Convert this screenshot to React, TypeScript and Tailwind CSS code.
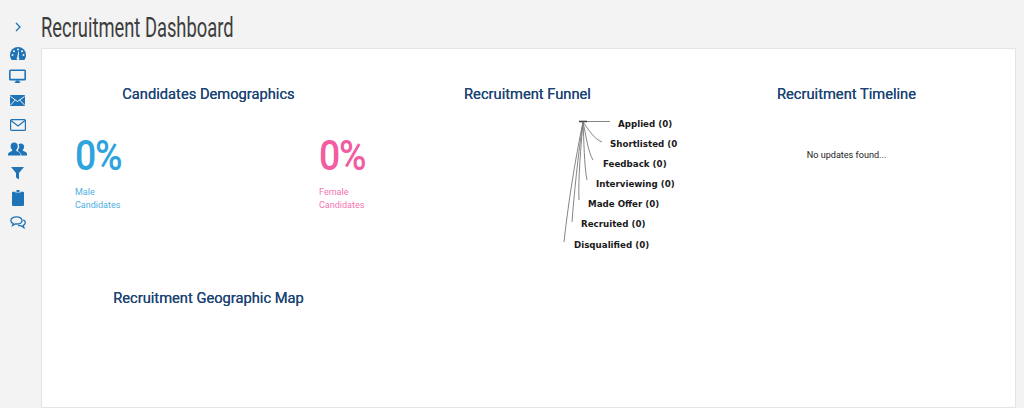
import React from "react";

const blue = "#1f73b7";

function Gauge() {
  return (
    <svg width="16" height="13" viewBox="0 0 16 13" fill={blue}>
      <path d="M8 0a8 8 0 0 0-8 8c0 2 .7 3.6 1.7 5h12.600c1-1.400 1.700-3 1.700-5a8 8 0 0 0-8-8Z" />
      <g fill="#f3f3f3">
        <circle cx="8" cy="2.600" r="1" />
        <circle cx="4" cy="4.200" r="1" />
        <circle cx="12" cy="4.200" r="1" />
        <circle cx="2.500" cy="8" r="1" />
        <circle cx="13.500" cy="8" r="1" />
        <path d="M7.200 10.500 8.300 4.600l.7.100-.2 5.800a1.300 1.300 0 1 1-1.600 0Z" />
      </g>
    </svg>
  );
}
function Monitor() {
  return (
    <svg width="17" height="15" viewBox="0 0 17 14" fill={blue}>
      <path fillRule="evenodd" d="M1.500 0h14A1.500 1.500 0 0 1 17 1.500v8a1.500 1.500 0 0 1-1.500 1.500h-14A1.500 1.500 0 0 1 0 9.500v-8A1.500 1.500 0 0 1 1.500 0Zm.1 1.400v7.800h13.800V1.400Z" />
      <path d="M6.500 11h4v1.600l1.500 1H5l1.500-1Z" />
    </svg>
  );
}
function MailSolid() {
  return (
    <svg width="15" height="11" viewBox="0 0 15 11" fill={blue}>
      <rect width="15" height="11" rx="1" />
      <path d="M.5 1.500 7.500 6.500l7-5M.5 10l5-5.200M14.500 10l-5-5.200" fill="none" stroke="#f3f3f3" strokeWidth="1" />
    </svg>
  );
}
function MailOutline() {
  return (
    <svg width="16" height="12" viewBox="0 0 16 12" fill="none" stroke={blue} strokeWidth="1.200">
      <rect x=".6" y=".6" width="14.800" height="10.800" rx="1" />
      <path d="M1 1.500 8 7l7-5.500" />
    </svg>
  );
}
function Users() {
  return (
    <svg width="19" height="14" viewBox="0 0 19 13" fill={blue}>
      <path d="M13 1c1.900 0 3.100 1.400 3.100 3.200 0 1.300-.6 2.400-1.300 3v1c1.700.6 4.200 1.400 4.200 3.300V13h-5.500c-.2-2.400-1.900-3.500-3.500-4.200V7c.9-.8 1.200-1.700 1.200-3 0-1.200-.3-1.800-.7-2.300.6-.4 1.500-.7 2.500-.7Z" />
      <path d="M6.200 0C8.300 0 9.800 1.600 9.800 3.700c0 1.400-.7 2.700-1.500 3.400v1.300c1.900.6 4.300 1.500 4.300 3.400V13H0v-1.200C0 9.900 2.200 9 4.100 8.400V7.100C3.300 6.400 2.600 5.100 2.600 3.700 2.600 1.600 4.100 0 6.200 0Z" />
    </svg>
  );
}
function Funnel() {
  return (
    <svg width="13" height="13" viewBox="0 0 13 13" fill={blue}>
      <path d="M0 0h13L8 6v6.500L5 10.500V6Z" />
    </svg>
  );
}
function Clipboard() {
  return (
    <svg width="12" height="16" viewBox="0 0 12 16" fill={blue}>
      <path d="M1 1.800h2.500V3h5V1.800H11a1 1 0 0 1 1 1V15a1 1 0 0 1-1 1H1a1 1 0 0 1-1-1V2.800a1 1 0 0 1 1-1Z" />
      <path d="M4.500 0h3v2h1v.5h-5V2h1Z" />
    </svg>
  );
}
function Chat() {
  return (
    <svg width="16" height="13" viewBox="0 0 16 13" fill="none" stroke={blue} strokeWidth="1.300">
      <path d="M6.500.8C3.300.8.800 2.400.800 4.500c0 1.300 1 2.400 2.400 3L2.500 9.500 5.200 8h1.300c3.200 0 5.500-1.500 5.500-3.500S9.700.8 6.500.8Z" />
      <path d="M13.300 3.800c1.200.6 2 1.600 2 2.700 0 1.200-.8 2.200-2 2.800l.6 2.400-2.800-2H8" />
    </svg>
  );
}

const labels: [string, number, number][] = [
  ["Applied (0)", 618, 123.500],
  ["Shortlisted (0", 610, 143.500],
  ["Feedback (0)", 603, 163.500],
  ["Interviewing (0)", 596, 183.500],
  ["Made Offer (0)", 588, 203.500],
  ["Recruited (0)", 581, 224],
  ["Disqualified (0)", 574, 244.500],
];

function Heading({ children }: { children: React.ReactNode }) {
  return (
    <h2 className="text-center text-[#1c4474] text-[14.700px] leading-5 font-normal [text-shadow:0_0_0.4px_#1c4474]">
      {children}
    </h2>
  );
}

function Stat({ color, label }: { color: string; label: string }) {
  return (
    <div className="w-[244px] shrink-0" style={{ color }}>
      <div className="h-[44px] text-[42px] leading-[44px] font-medium tracking-[-1.500px] origin-left scale-x-[0.89]">0%</div>
      <div className="mt-[8px] text-[9px] leading-[13px] w-[60px] opacity-85">{label}</div>
    </div>
  );
}

export default function App() {
  return (
    <div
      className="flex h-[408px] w-[1024px] overflow-hidden bg-[#f3f3f3]"
      style={{ fontFamily: 'Roboto, "Noto Sans", sans-serif' }}
    >
      <aside className="flex w-[41px] shrink-0 flex-col items-center pr-[6px] pt-[21px]">
        <svg width="8" height="12" viewBox="0 0 8 12" fill="none" stroke={blue} strokeWidth="1.300">
          <path d="M2 2l4 4-4 4" />
        </svg>
        <div className="mt-[8px] flex flex-col items-center">
          <div className="flex h-[24px] items-center"><Gauge /></div>
          <div className="flex h-[23px] items-center"><Monitor /></div>
          <div className="flex h-[25px] items-center"><MailSolid /></div>
          <div className="flex h-[24px] items-center"><MailOutline /></div>
          <div className="flex h-[24px] items-center"><Users /></div>
          <div className="flex h-[24px] items-center"><Funnel /></div>
          <div className="flex h-[25px] items-center"><Clipboard /></div>
          <div className="flex h-[24px] items-center"><Chat /></div>
        </div>
      </aside>
      <main className="flex w-[975px] flex-col">
        <h1 className="h-[48px] pt-[11px] text-[28px] leading-[34px] text-[#3d3d3d] font-normal origin-left scale-x-[0.655] whitespace-nowrap">
          Recruitment Dashboard
        </h1>
        <section className="relative flex-1 border border-[#e4e4e4] bg-white pl-[7px] pt-[35px]">
          <div className="grid grid-cols-[319px_319px_319px]">
            <div className="h-[204px]">
              <Heading>Candidates Demographics</Heading>
              <div className="mt-[30px] flex pl-[26px]">
                <Stat color="#2ea3dc" label="Male Candidates" />
                <Stat color="#f25ca2" label="Female Candidates" />
              </div>
            </div>
            <div>
              <Heading>Recruitment Funnel</Heading>
            </div>
            <div>
              <Heading>Recruitment Timeline</Heading>
              <p className="mt-[43px] text-center text-[9.100px] leading-4 text-[#222]">No updates found...</p>
            </div>
            <div>
              <Heading>Recruitment Geographic Map</Heading>
            </div>
          </div>

          <svg className="absolute left-[518px] top-[66px]" width="60" height="135" viewBox="560 115 60 135" fill="none" stroke="#777" strokeWidth="0.900">
            <path d="M579 121.500H610" stroke="#777" />
            <path d="M579 121.500H587" stroke="#444" strokeWidth="1.600" />
            <path d="M583 122C589 130 594 139 602 142" />
            <path d="M583 122C586 135 588 152 593 160" />
            <path d="M583 122C584 140 584 165 587 180" />
            <path d="M583 122C581 145 578 180 579 200" />
            <path d="M583 122C578 155 574 195 572 222" />
            <path d="M583 122C575 160 568 205 564 242" />
          </svg>

          {labels.map(([text, x, y]) => (
            <span
              key={text}
              className="absolute leading-3 font-bold text-[#1a1a1a] whitespace-nowrap"
              style={{ left: x - 42, top: y - 55, fontFamily: '"DejaVu Sans", sans-serif', fontSize: 8.7 }}
            >
              {text}
            </span>
          ))}
        </section>
      </main>
    </div>
  );
}
